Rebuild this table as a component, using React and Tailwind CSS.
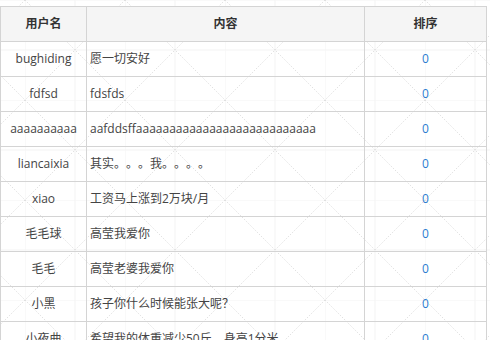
import React from 'react';

const rows = [
  { name: 'bughiding', content: '愿一切安好', sort: 0 },
  { name: 'fdfsd', content: 'fdsfds', sort: 0 },
  { name: 'aaaaaaaaaa', content: 'aafddsff' + 'a'.repeat(27), sort: 0 },
  { name: 'liancaixia', content: '其实。。。我。。。。', sort: 0 },
  { name: 'xiao', content: '工资马上涨到2万块/月', sort: 0 },
  { name: '毛毛球', content: '高莹我爱你', sort: 0 },
  { name: '毛毛', content: '高莹老婆我爱你', sort: 0 },
  { name: '小黑', content: '孩子你什么时候能张大呢？', sort: 0 },
  { name: '小夜曲', content: '希望我的体重减少50斤，身高1分米', sort: 0 },
];

const GridBackground = () => (
  <svg className="absolute inset-0 w-full h-full" aria-hidden="true">
    <defs>
      <pattern id="paper" x="25" y="0" width="100" height="100" patternUnits="userSpaceOnUse">
        <path d="M0 0V100M50 0V100M0 0H100M0 50H100" stroke="#f3f3f3" strokeWidth="1" fill="none" />
        <path d="M0 0L100 100M100 0L0 100" stroke="#d9d9d9" strokeWidth="0.8" strokeDasharray="1.5 1.5" fill="none" />
      </pattern>
    </defs>
    <rect width="100%" height="100%" fill="url(#paper)" />
  </svg>
);

export default function App() {
  return (
    <div
      className="relative w-[490px] h-[340px] overflow-hidden bg-white text-[12px] text-[#444] [text-spacing-trim:space-all]"
      style={{ fontFamily: '"Open Sans", "Noto Sans CJK SC", sans-serif' }}
    >
      <GridBackground />
      <div className="relative pt-[6px]">
        <table className="w-[486px] border-collapse table-fixed">
          <colgroup>
            <col className="w-[86px]" />
            <col className="w-[278px]" />
            <col className="w-[122px]" />
          </colgroup>
          <thead>
            <tr className="h-[35px] bg-[#f5f5f5] text-[#333]">
              <th className="border border-[#d4d4d4] font-bold text-center">用户名</th>
              <th className="border border-[#d4d4d4] font-bold text-center">内容</th>
              <th className="border border-[#d4d4d4] font-bold text-center">排序</th>
            </tr>
          </thead>
          <tbody>
            {rows.map((r, i) => (
              <tr key={i} className="h-[35px]">
                <td className="border border-[#d4d4d4] text-center whitespace-nowrap">{r.name}</td>
                <td className="border border-[#d4d4d4] pl-[3px] whitespace-nowrap">{r.content}</td>
                <td className="border border-[#d4d4d4] text-center text-[#2b7bd0]">{r.sort}</td>
              </tr>
            ))}
          </tbody>
        </table>
      </div>
    </div>
  );
}
